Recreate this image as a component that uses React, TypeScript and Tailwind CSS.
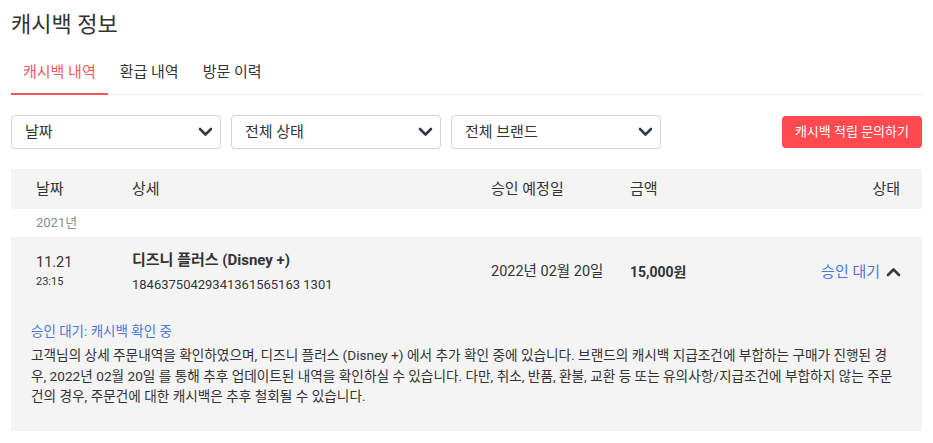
import { useState } from 'react';

const font = "font-['Roboto','Noto_Sans_CJK_KR',sans-serif]";

function Chevron({ up = false }: { up?: boolean }) {
  return (
    <svg width="15" height="10" viewBox="0 0 15 10" className="shrink-0">
      <polyline
        points={up ? '2,8 7.5,2.5 13,8' : '2,2 7.5,7.5 13,2'}
        fill="none"
        stroke="#333b46"
        strokeWidth="2.6"
        strokeLinecap="round"
        strokeLinejoin="round"
      />
    </svg>
  );
}

function Select({ label }: { label: string }) {
  return (
    <button className="flex h-[34px] w-[210px] items-center justify-between rounded-[4px] border border-[#d5d5d5] bg-white pl-[13px] pr-[7px] text-[15px] text-[#333]">
      <span>{label}</span>
      <Chevron />
    </button>
  );
}

export default function App() {
  const [tab, setTab] = useState(0);
  const tabs = ['캐시백 내역', '환급 내역', '방문 이력'];

  return (
    <div className={`${font} min-h-[443px] w-full bg-white px-[11px] text-[#333]`}>
      <h1 className="pt-[9px] text-[22px] leading-[32px] text-[#333]">캐시백 정보</h1>

      <div className="mt-[20px] flex border-b border-[#eeeeee]">
        {tabs.map((t, i) => (
          <button
            key={t}
            onClick={() => setTab(i)}
            className={`-mb-px border-b-2 px-[12px] pb-[10px] text-[15px] leading-[22px] ${
              tab === i ? 'border-[#f2575c] text-[#f2575c]' : 'border-transparent text-[#333]'
            }`}
          >
            {t}
          </button>
        ))}
      </div>

      <div className="mt-[20px] flex items-center">
        <div className="flex gap-[10px]">
          <Select label="날짜" />
          <Select label="전체 상태" />
          <Select label="전체 브랜드" />
        </div>
        <button className="ml-auto h-[32px] rounded-[4px] bg-[#ff4b4f] px-[13px] text-[13px] text-white">
          캐시백 적립 문의하기
        </button>
      </div>

      <div className="mt-[20px] grid h-[40px] grid-cols-[96px_359px_139px_1fr_auto] items-center bg-[#f4f4f4] pl-[25px] pr-[22px] text-[15px] text-[#333]">
        <span>날짜</span>
        <span>상세</span>
        <span>승인 예정일</span>
        <span>금액</span>
        <span>상태</span>
      </div>

      <div className="flex h-[28px] items-center pl-[25px] text-[13px] text-[#7e8ea3]">2021년</div>

      <div className="bg-[#f4f4f4] pb-[24px]">
        <div className="grid h-[70px] grid-cols-[96px_359px_139px_1fr_auto] items-center pl-[25px] pr-[21px]">
          <div className="flex flex-col">
            <span className="text-[14.5px] leading-[20px]">11.21</span>
            <span className="text-[11px] leading-[18px]">23:15</span>
          </div>
          <div className="flex flex-col">
            <span className="text-[15px] font-bold leading-[22px]">디즈니 플러스 (Disney +)</span>
            <span className="mt-[4px] text-[13px] leading-[20px]">18463750429341361565163 1301</span>
          </div>
          <span className="text-[14.5px]">2022년 02월 20일</span>
          <span className="text-[14px] font-bold">15,000원</span>
          <div className="flex items-center gap-[6px]">
            <span className="text-[15px] text-[#4a78d6]">승인 대기</span>
            <Chevron up />
          </div>
        </div>
        <div className="pl-[20px] pr-[26px] pt-[14px]">
          <p className="text-[13.5px] leading-[20px] text-[#4a78d6]">승인 대기: 캐시백 확인 중</p>
          <p className="mt-[4px] break-all text-[13.65px] leading-[20.5px] text-[#333]">
            고객님의 상세 주문내역을 확인하였으며, 디즈니 플러스 (Disney +) 에서 추가 확인 중에 있습니다. 브랜드의 캐시백 지급조건에 부합하는 구매가 진행된 경우, 2022년 02월 20일 를 통해 추후 업데이트된 내역을 확인하실 수 있습니다. 다만, 취소, 반품, 환불, 교환 등 또는 유의사항/지급조건에 부합하지 않는 주문건의 경우, 주문건에 대한 캐시백은 추후 철회될 수 있습니다.
          </p>
        </div>
      </div>
    </div>
  );
}
